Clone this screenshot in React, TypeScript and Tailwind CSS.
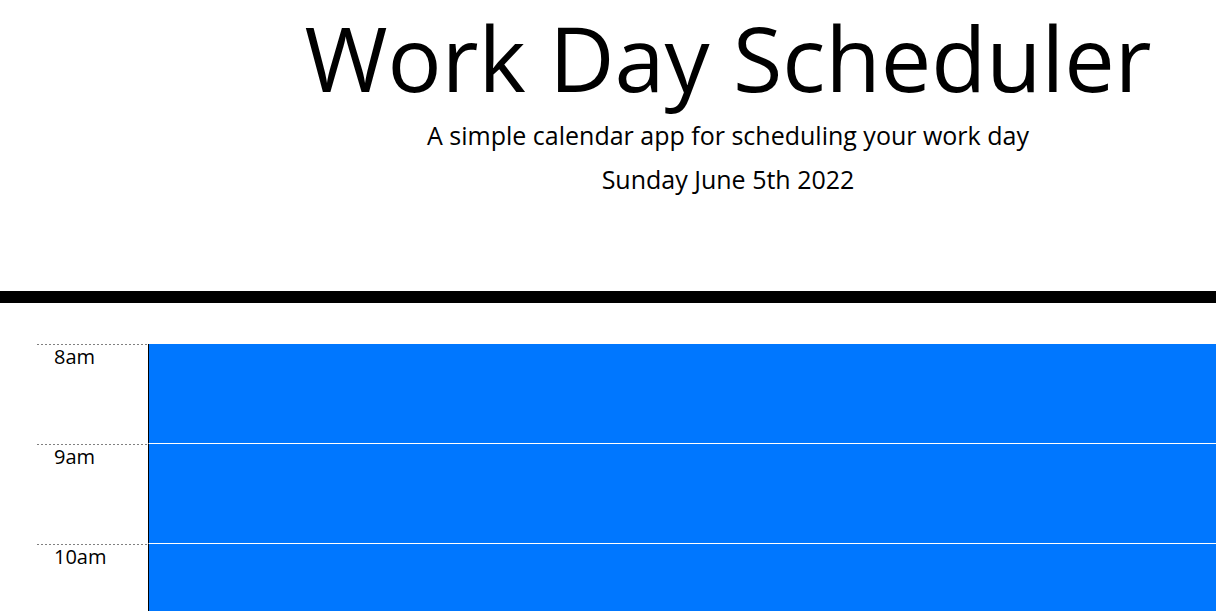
import React from 'react';

const hours = ['8am', '9am', '10am', '11am', '12pm', '1pm', '2pm', '3pm', '4pm', '5pm'];

function TimeBlock({ hour }: { hour: string }) {
  return (
    <div className="flex h-[100px]">
      {/* dotted top line: 1px dots, 4px apart */}
      <div className="w-[113px] shrink-0 bg-[linear-gradient(to_right,#000_1px,transparent_1px)] bg-[length:4px_1px] bg-repeat-x bg-top pl-[19px] pt-px text-[20px] leading-[24px] text-black">
        {hour}
      </div>
      <textarea
        className="flex-1 resize-none border-l border-l-black border-b border-b-white bg-[#0077ff] text-white outline-none"
        defaultValue=""
      />
    </div>
  );
}

export default function App() {
  return (
    <div className="min-h-screen bg-white text-black" style={{ fontFamily: '"Open Sans", "Noto Sans", sans-serif' }}>
      <header className="flex flex-col items-center pl-[240px] pt-[3px] h-[291px]">
        <h1 className="text-[90px] leading-[108px] font-normal whitespace-nowrap">Work Day Scheduler</h1>
        <p className="mt-[6px] text-[25px] leading-[36px]">A simple calendar app for scheduling your work day</p>
        <p className="mt-[8px] text-[25px] leading-[36px]">Sunday June 5th 2022</p>
      </header>
      <div className="h-[12px] bg-black" />
      <main className="pl-[35px] pt-[41px]">
        {hours.map((h) => (
          <TimeBlock key={h} hour={h} />
        ))}
      </main>
    </div>
  );
}
